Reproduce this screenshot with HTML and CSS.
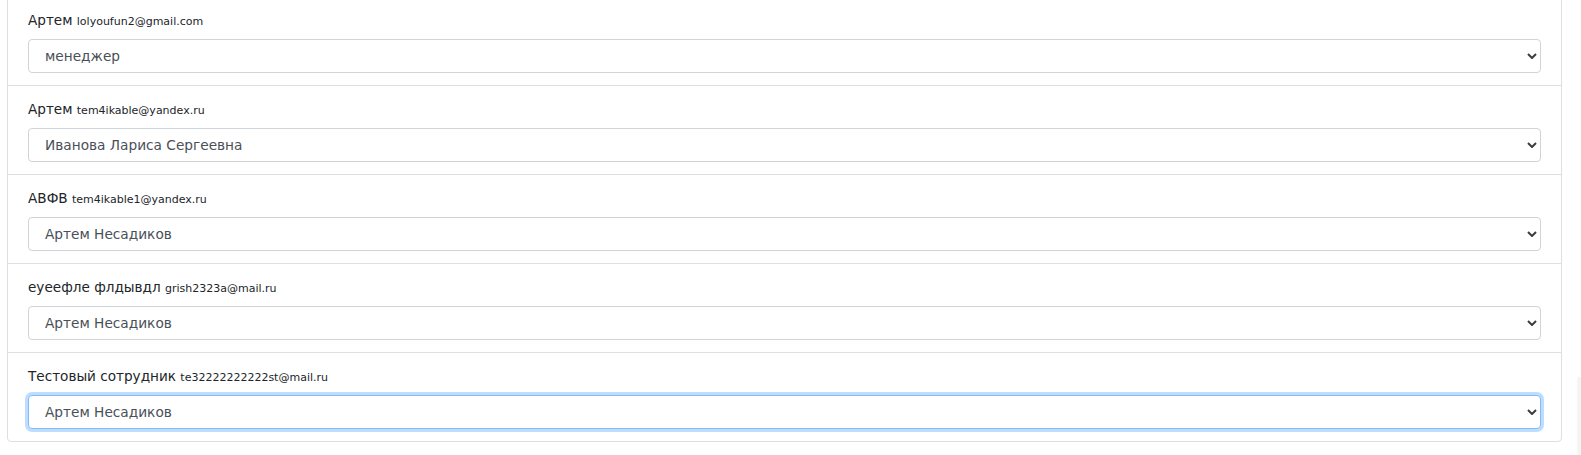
FILE: index.html
```html
<!DOCTYPE html>
<html lang="ru">
<head>
<meta charset="utf-8">
<title>Сотрудники</title>
<link rel="stylesheet" href="styles.css">
</head>
<body>
<div class="page">
  <ul class="card">
    <li class="row">
      <label class="lbl">Артем <small class="mail">lolyoufun2@gmail.com</small></label>
      <div class="sel-wrap">
        <select class="sel"><option>менеджер</option></select>
        <svg class="chev" width="10" height="6" viewBox="0 0 10 6"><polyline points="1,1 5,5 9,1" fill="none" stroke="#3c3c3c" stroke-width="2"/></svg>
      </div>
    </li>
    <li class="row">
      <label class="lbl">Артем <small class="mail">tem4ikable@yandex.ru</small></label>
      <div class="sel-wrap">
        <select class="sel"><option>Иванова Лариса Сергеевна</option></select>
        <svg class="chev" width="10" height="6" viewBox="0 0 10 6"><polyline points="1,1 5,5 9,1" fill="none" stroke="#3c3c3c" stroke-width="2"/></svg>
      </div>
    </li>
    <li class="row">
      <label class="lbl">АВФВ <small class="mail">tem4ikable1@yandex.ru</small></label>
      <div class="sel-wrap">
        <select class="sel"><option>Артем Несадиков</option></select>
        <svg class="chev" width="10" height="6" viewBox="0 0 10 6"><polyline points="1,1 5,5 9,1" fill="none" stroke="#3c3c3c" stroke-width="2"/></svg>
      </div>
    </li>
    <li class="row">
      <label class="lbl">еуеефле флдывдл <small class="mail">grish2323a@mail.ru</small></label>
      <div class="sel-wrap">
        <select class="sel"><option>Артем Несадиков</option></select>
        <svg class="chev" width="10" height="6" viewBox="0 0 10 6"><polyline points="1,1 5,5 9,1" fill="none" stroke="#3c3c3c" stroke-width="2"/></svg>
      </div>
    </li>
    <li class="row">
      <label class="lbl">Тестовый сотрудник <small class="mail">te32222222222st@mail.ru</small></label>
      <div class="sel-wrap">
        <select class="sel focus"><option>Артем Несадиков</option></select>
        <svg class="chev" width="10" height="6" viewBox="0 0 10 6"><polyline points="1,1 5,5 9,1" fill="none" stroke="#3c3c3c" stroke-width="2"/></svg>
      </div>
    </li>
  </ul>
  <div class="edge"></div>
</div>
</body>
</html>
```
FILE: styles.css
```css
* { box-sizing: border-box; }
html, body { margin: 0; padding: 0; background: #fff; }
body {
  font-family: "DejaVu Sans", Verdana, sans-serif;
  color: #212529;
  overflow: hidden;
}
.page {
  display: flex;
  align-items: flex-start;
  padding-left: 7px;
  margin-top: -4px;
}
.card {
  list-style: none;
  margin: 0;
  padding: 0;
  width: 1555px;
  border: 1px solid #dfdfdf;
  border-radius: 4px;
  background: #fff;
}
.row {
  padding: 12px 20px;
  border-bottom: 1px solid #dfdfdf;
}
.row:last-child { border-bottom: none; }
.lbl {
  display: block;
  height: 22px;
  font-size: 13.6px;
  line-height: 22px;
  margin-bottom: 8px;
  white-space: nowrap;
}
.mail { font-size: 11px; line-height: 1; }
.sel-wrap { position: relative; }
.sel {
  display: block;
  width: 100%;
  height: 34px;
  margin: 0;
  padding: 0 16px;
  font-family: "DejaVu Sans", Verdana, sans-serif;
  font-size: 13.7px;
  color: #495057;
  background: #fff;
  border: 1px solid #ced4da;
  border-radius: 4px;
  -webkit-appearance: none;
  appearance: none;
  outline: none;
}
.sel.focus {
  border-color: #80bdff;
  box-shadow: 0 0 0 3px rgba(0, 123, 255, 0.25);
}
.chev {
  position: absolute;
  right: 4px;
  top: 14px;
  pointer-events: none;
}
.edge {
  width: 3px;
  height: 90px;
  margin-top: 381px;
  margin-left: 16px;
  background: #f4f4f4;
  box-shadow: -1px 0 2px rgba(0,0,0,0.04);
}
```
